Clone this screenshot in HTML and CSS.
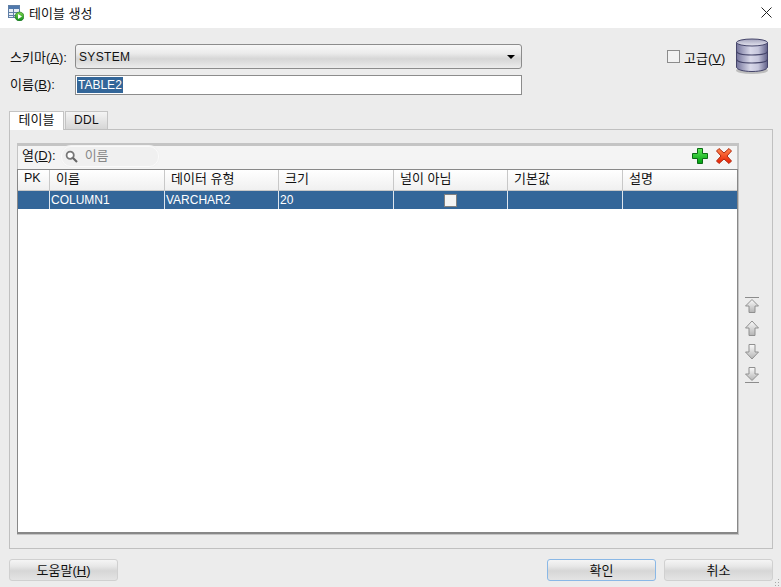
FILE: index.html
```html
<!DOCTYPE html>
<html lang="ko">
<head>
<meta charset="utf-8">
<title>테이블 생성</title>
<link rel="stylesheet" href="styles.css">
</head>
<body>
<div class="dialog">
  <header class="titlebar">
    <svg class="app-icon" width="16" height="16" viewBox="0 0 16 16">
      <defs><linearGradient id="ai" x1="0" y1="0" x2="0" y2="1"><stop offset="0" stop-color="#7cd64a"/><stop offset="1" stop-color="#0c8a1c"/></linearGradient></defs>
      <rect x="0.5" y="0.5" width="11" height="12" fill="#e8eef6" stroke="#5f7fa6"/>
      <rect x="1" y="1" width="10" height="3" fill="#4f78ad"/>
      <path d="M0.5 7.5H11.5M0.5 10.5H11.5M5.5 4V13" stroke="#5f7fa6" fill="none"/>
      <circle cx="11.5" cy="11.5" r="4.5" fill="url(#ai)" stroke="#1b6b22" stroke-width=".6"/>
      <path d="M10 9L14 11.5L10 14Z" fill="#fff"/>
    </svg>
    <span class="title-text">테이블 생성</span>
    <svg class="close" width="11" height="11" viewBox="0 0 11 11"><path d="M.5 .5L10.5 10.5M10.5 .5L.5 10.5" stroke="#222" fill="none"/></svg>
  </header>

  <main class="content">
    <section class="form">
      <div class="fields">
        <label class="lbl lbl-schema">스키마(<u>A</u>):</label>
        <div class="select"><span>SYSTEM</span><i class="caret"></i></div>
        <label class="lbl lbl-name">이름(<u>B</u>):</label>
        <div class="input"><span class="selected">TABLE2</span></div>
      </div>
      <div class="advanced">
        <span class="check"></span>
        <span class="adv-label">고급(<u>V</u>)</span>
        <svg class="db" width="36" height="38" viewBox="0 0 36 38">
          <defs>
            <linearGradient id="dbg" x1="0" y1="0" x2="1" y2="0"><stop offset="0" stop-color="#74749c"/><stop offset=".45" stop-color="#d9d9ea"/><stop offset=".7" stop-color="#c6c6dc"/><stop offset="1" stop-color="#5f5f88"/></linearGradient>
            <linearGradient id="dbt" x1="0" y1="0" x2="0" y2="1"><stop offset="0" stop-color="#a3a3bd"/><stop offset="1" stop-color="#e6e6f0"/></linearGradient>
          </defs>
          <ellipse cx="18" cy="33.5" rx="16" ry="3.5" fill="#bdbdbd"/>
          <path d="M2.5 5.5V30C2.5 32.5 9 34.5 18 34.5S33.5 32.5 33.5 30V5.5Z" fill="url(#dbg)" stroke="#45456a"/>
          <ellipse cx="18" cy="5.5" rx="15.5" ry="3.5" fill="url(#dbt)" stroke="#45456a"/>
          <path d="M2.5 14C2.5 16.5 9 18 18 18S33.5 16.5 33.5 14M2.5 22C2.5 24.5 9 26 18 26S33.5 24.5 33.5 22" fill="none" stroke="#45456a" stroke-width="1.2"/>
        </svg>
      </div>
    </section>

    <nav class="tabs">
      <span class="tab active">테이블</span>
      <span class="tab tab-ddl">DDL</span>
    </nav>

    <section class="panel">
      <div class="grid-wrap">
        <div class="toolbar">
          <span class="col-label">열(<u>D</u>):</span>
          <div class="search">
            <svg width="13" height="13" viewBox="0 0 13 13"><circle cx="5.2" cy="5.2" r="3.6" fill="#fff" stroke="#777" stroke-width="1.8"/><path d="M8 8L12 12" stroke="#666" stroke-width="2.2"/></svg>
            <span class="placeholder">이름</span>
          </div>
          <div class="tools">
            <svg width="16" height="16" viewBox="0 0 16 16"><defs><linearGradient id="gp" x1="0" y1="0" x2="0" y2="1"><stop offset="0" stop-color="#5fe85a"/><stop offset="1" stop-color="#00a010"/></linearGradient></defs><path d="M5.5 .5H10.5V5.5H15.5V10.5H10.5V15.5H5.5V10.5H.5V5.5H5.5Z" fill="url(#gp)" stroke="#0b6a14"/></svg>
            <svg width="16" height="16" viewBox="0 0 16 16"><defs><linearGradient id="rx" x1="0" y1="0" x2="0" y2="1"><stop offset="0" stop-color="#ff8a50"/><stop offset="1" stop-color="#e81c00"/></linearGradient></defs><path d="M3 .5L8 5L13 .5L15.5 3L11 8L15.5 13L13 15.5L8 11L3 15.5L.5 13L5 8L.5 3Z" fill="url(#rx)" stroke="#b02a10"/></svg>
          </div>
        </div>
        <div class="table">
          <div class="row head">
            <div class="cell c-pk">PK</div>
            <div class="cell">이름</div>
            <div class="cell">데이터 유형</div>
            <div class="cell">크기</div>
            <div class="cell">널이 아님</div>
            <div class="cell">기본값</div>
            <div class="cell">설명</div>
          </div>
          <div class="row sel">
            <div class="cell"></div>
            <div class="cell">COLUMN1</div>
            <div class="cell">VARCHAR2</div>
            <div class="cell">20</div>
            <div class="cell center"><span class="cellcheck"></span></div>
            <div class="cell"></div>
            <div class="cell"></div>
          </div>
        </div>
      </div>
      <div class="movers">
        <svg width="16" height="17" viewBox="0 0 16 17"><defs><linearGradient id="ar" x1="0" y1="0" x2="0" y2="1"><stop offset="0" stop-color="#fbfbfb"/><stop offset="1" stop-color="#b4b4b4"/></linearGradient></defs><path d="M1 .5H15" stroke="#8c8c8c"/><path d="M8 2.5L14.5 9H11V15.5H5V9H1.5Z" fill="url(#ar)" stroke="#909090"/></svg>
        <svg width="16" height="17" viewBox="0 0 16 17"><path d="M8 1L14.5 8H11V15.5H5V8H1.5Z" fill="url(#ar)" stroke="#909090"/></svg>
        <svg width="16" height="17" viewBox="0 0 16 17"><path d="M8 16L14.5 9H11V1.5H5V9H1.5Z" fill="url(#ar)" stroke="#909090"/></svg>
        <svg width="16" height="17" viewBox="0 0 16 17"><path d="M8 14.5L14.5 8H11V1.5H5V8H1.5Z" fill="url(#ar)" stroke="#909090"/><path d="M1 16.5H15" stroke="#8c8c8c"/></svg>
      </div>
    </section>

    <footer class="footer">
      <button class="btn">도움말(<u>H</u>)</button>
      <div class="spacer"></div>
      <button class="btn focus">확인</button>
      <button class="btn">취소</button>
    </footer>
  </main>
  <svg class="grip" width="7" height="7" viewBox="0 0 7 7"><path d="M6 0V1H5V0ZM6 3V4H5V3ZM3 3V4H2V3ZM6 6V7H5V6ZM3 6V7H2V6Z" fill="#a8a8a8"/></svg>
</div>
</body>
</html>
```
FILE: styles.css
```css
* { box-sizing: border-box; }
html, body { margin: 0; padding: 0; }
body {
  width: 781px;
  height: 587px;
  overflow: hidden;
  background: #ececec;
  font-family: "Liberation Sans", "Noto Sans CJK KR", sans-serif;
  font-size: 12px;
  color: #111;
}
.dialog { position: relative; width: 781px; height: 587px; display: flex; flex-direction: column; }

.titlebar { height: 28px; background: #fff; display: flex; align-items: center; padding: 0 9px 0 8px; }
.app-icon { margin-right: 5px; margin-top: -3px; }
.title-text { font-size: 13px; margin-top: -4px; }
.close { margin-left: auto; margin-top: -4px; }

.content { flex: 1; display: flex; flex-direction: column; padding: 0 8px 0 9px; min-height: 0; }

.form { display: flex; padding-top: 16px; height: 83px; }
.fields { display: grid; grid-template-columns: 66px 447px; grid-template-rows: 25px 20px; row-gap: 6px; align-items: center; }
.lbl { padding-left: 1px; font-size: 13px; }
.lbl-schema { padding-bottom: 1px; }
.lbl-name { padding-bottom: 4px; }
.select {
  height: 25px;
  border: 1px solid #8c8c8c;
  border-radius: 3px;
  background: linear-gradient(#f7f7f7, #ececec 35%, #d6d6d6 60%, #ececec);
  display: flex;
  align-items: center;
  justify-content: space-between;
  padding: 0 3px 0 3px;
  font-size: 12px;
  letter-spacing: .35px;
}
.caret { width: 0; height: 0; border-left: 4px solid transparent; border-right: 4px solid transparent; border-top: 4px solid #000; margin-right: 3px; }
.input { height: 20px; border: 1px solid #8c8c8c; background: #fff; padding: 1px; display: flex; align-items: stretch; }
.selected { background: #336699; color: #fff; line-height: 16px; padding: 0 1px; }

.advanced { margin-left: auto; display: flex; align-items: flex-start; padding-right: 3px; margin-top: -5px; font-size: 13px; }
.check { width: 13px; height: 13px; border: 1px solid #8c8c8c; background: #f2f2f2; margin-top: 11px; margin-right: 4px; }
.adv-label { margin-top: 9px; width: 48px; white-space: nowrap; }
.db { margin-left: 2px; margin-top: -2px; }

.tabs { display: flex; height: 18px; gap: 1px; position: relative; z-index: 1; font-size: 13px; }
.tab {
  height: 18px;
  border: 1px solid #c4c4c4;
  border-bottom: none;
  background: linear-gradient(#f4f4f4, #d6d6d6);
  line-height: 16px;
  text-align: center;
}
.tab.active { background: #fff; height: 19px; width: 55px; }
.tab-ddl { width: 43px; font-size: 12px; letter-spacing: .3px; }

.panel { flex: 1; min-height: 0; border: 1px solid #c0c0c0; display: flex; padding: 13px 0 13px 7px; background: #ececec; }
.grid-wrap { width: 722px; background: #fff; display: flex; flex-direction: column; border: 1px solid #c4c4c4; border-top-width: 3px; border-right-width: 2px; }
.toolbar { height: 23px; background: #f4f4f4; display: flex; align-items: center; padding: 0 5px 3px 4px; flex: none; font-size: 13px; }
.col-label { margin-right: 5px; padding-bottom: 3px; }
.search { width: 98px; height: 21px; border-radius: 10px; background: #f0f0f0; border: 1px solid #fafafa; box-shadow: 0 0 0 1px #f2f2f2; display: flex; align-items: center; gap: 7px; padding-left: 3px; color: #888; flex: none; }
.placeholder { padding-bottom: 3px; }
.tools { margin-left: auto; display: flex; gap: 8px; }

.table { flex: 1; border: 1px solid #888; border-bottom-width: 2px; background: #fff; margin-right: -1px; margin-left: -1px; }
.row { display: grid; grid-template-columns: 32px 115px 114px 115px 114px 115px 114px; }
.row.head { height: 21px; background: linear-gradient(#fff, #f0f0f0); border-bottom: 1px solid #c8c8c8; font-size: 13px; }
.row.head .cell { padding-left: 6px; line-height: 17px; border-right: 1px solid #c8c8c8; }
.row.head .cell:last-child { border-right: none; }
.row.head .c-pk { padding-left: 6px; font-size: 12.5px; }
.row.sel { height: 18px; background: #336699; color: #fff; }
.row.sel .cell { padding-left: 1px; line-height: 18px; border-right: 1px solid #dfe6ee; white-space: nowrap; overflow: hidden; }
.row.sel .cell:last-child { border-right: none; }
.center { display: flex; align-items: center; justify-content: center; }
.row.sel .cell.center { padding: 0; }
.cellcheck { width: 13px; height: 13px; border: 1px solid #808080; background: #f4f4f4; margin-top: 1px; }

.movers { flex: 1; display: flex; flex-direction: column; align-items: center; justify-content: center; gap: 6px; padding-left: 1px; padding-right: 9px; margin-top: 2px; }

.footer { height: 38px; display: flex; align-items: flex-start; gap: 8px; padding-top: 10px; flex: none; }
.spacer { flex: 1; }
.btn {
  width: 109px;
  height: 22px;
  border: 1px solid #d0d0d0;
  border-radius: 3px;
  background: linear-gradient(#f5f5f5, #e8e8e8 30%, #d6d6d6 55%, #e4e4e4);
  font: inherit;
  font-size: 13px;
  color: #111;
  padding: 0 0 2px;
}
.btn.focus { border-color: #8ab8e6; }
.grip { position: absolute; right: 1px; bottom: 1px; }
```
